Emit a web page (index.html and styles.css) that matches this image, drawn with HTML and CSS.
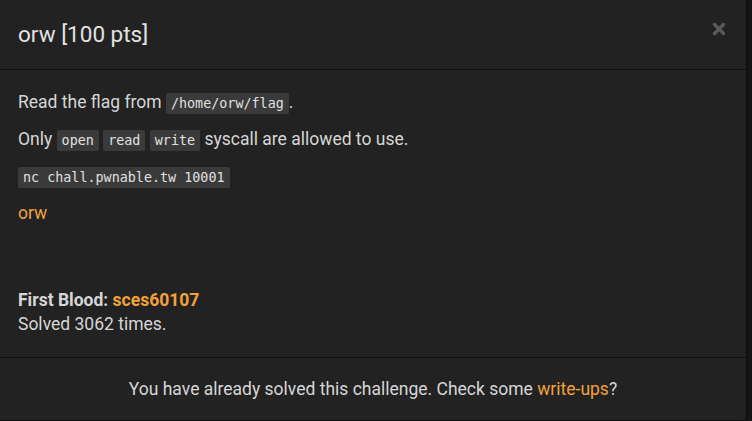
FILE: index.html
```html
<!DOCTYPE html>
<html>
<head>
<meta charset="utf-8">
<link rel="stylesheet" href="styles.css">
</head>
<body>
<div class="modal">
  <div class="modal-header">
    <h4 class="modal-title">orw [100 pts]</h4>
    <svg class="close" width="14" height="14" viewBox="0 0 14 14"><path d="M2.5 2.5 L11.5 11.5 M11.5 2.5 L2.5 11.5" stroke="#5a5a5a" stroke-width="3.4" stroke-linecap="round"/></svg>
  </div>
  <div class="modal-body">
    <p>Read the flag from <code>/home/orw/flag</code>.</p>
    <p>Only <code>open</code> <code>read</code> <code>write</code> syscall are allowed to use.</p>
    <p><code>nc chall.pwnable.tw 10001</code></p>
    <p><a class="link">orw</a></p>
    <div class="stats">
      <div><strong>First Blood: <a class="link">sces60107</a></strong></div>
      <div>Solved 3062 times.</div>
    </div>
  </div>
  <div class="modal-footer">
    You have already solved this challenge. Check some <a class="link">write-ups</a>?
  </div>
</div>
</body>
</html>
```
FILE: styles.css
```css
html, body {
  margin: 0;
  padding: 0;
  background: #141414;
  height: 100%;
}
body {
  font-family: Roboto, "Liberation Sans", sans-serif;
  color: #d6d6d6;
  font-size: 17.5px;
  overflow: hidden;
}
.modal {
  width: 746px;
  height: 420px;
  background: #222222;
  border-right: 1px solid #0d0d0d;
  border-bottom: 1px solid #0d0d0d;
  border-bottom-right-radius: 5px;
  display: flex;
  flex-direction: column;
}
.modal-header {
  height: 69px;
  border-bottom: 1px solid #0f0f0f;
  display: flex;
  align-items: center;
  justify-content: space-between;
  padding: 0 20px 0 18px;
  box-sizing: content-box;
}
.modal-title {
  margin: 0;
  font-size: 22.5px;
  font-weight: 400;
  color: #e2e2e2;
  padding-bottom: 1px;
}
.close {
  display: block;
  margin-top: -12px;
}
.modal-body {
  padding: 20px 18px 21px;
  flex: none;
}
.modal-body p {
  margin: 0 0 13px;
  height: 24px;
  line-height: 24px;
}
.modal-body p:nth-of-type(4) {
  margin-bottom: 63px;
}
code {
  font-family: "DejaVu Sans Mono", "Liberation Mono", monospace;
  font-size: 13.4px;
  line-height: 1;
  background: #3a3a3a;
  color: #e0e0e0;
  padding: 3px 5px;
  border-radius: 2px;
}
.link {
  color: #f3a13a;
  text-decoration: none;
}
.stats {
  line-height: 24px;
}
.stats div {
  height: 24px;
}
.stats strong {
  font-weight: 700;
}
.modal-footer {
  border-top: 1px solid #0f0f0f;
  padding-top: 19px;
  line-height: 24px;
  text-align: center;
  flex: 1;
}
```
